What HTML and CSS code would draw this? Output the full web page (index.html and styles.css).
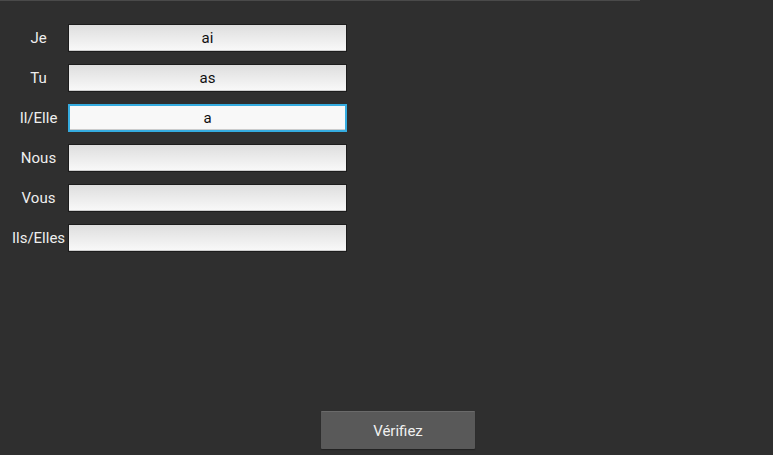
FILE: index.html
```html
<!DOCTYPE html>
<html>
<head>
<meta charset="utf-8">
<link rel="stylesheet" href="styles.css">
</head>
<body>
<div class="topline"></div>
<main class="page">
  <form class="grid">
    <label class="lbl">Je</label><div class="field">ai</div>
    <label class="lbl">Tu</label><div class="field">as</div>
    <label class="lbl">Il/Elle</label><div class="field focused">a</div>
    <label class="lbl">Nous</label><div class="field"></div>
    <label class="lbl">Vous</label><div class="field"></div>
    <label class="lbl">Ils/Elles</label><div class="field"></div>
  </form>
  <div class="actions"><button class="btn" type="button">Vérifiez</button></div>
</main>
</body>
</html>
```
FILE: styles.css
```css
html, body {
  margin: 0;
  padding: 0;
  height: 100%;
  background: #2f2f2f;
  font-family: Roboto, "Liberation Sans", sans-serif;
}
.topline {
  width: 640px;
  height: 1px;
  background: #4a4a4a;
}
.page {
  height: 454px;
  display: flex;
  flex-direction: column;
  box-sizing: border-box;
  padding-top: 23px;
}
.grid {
  display: grid;
  grid-template-columns: 68px 279px;
  grid-auto-rows: 28px;
  row-gap: 12px;
  flex: 1;
  align-content: start;
  margin: 0;
}
.lbl {
  color: #eeeeee;
  font-size: 15px;
  text-align: center;
  line-height: 28px;
  padding-left: 9px;
  white-space: nowrap;
}
.field {
  box-sizing: border-box;
  border: 1px solid #1c1c1c;
  box-shadow: inset 0 -1px 0 #cdcdcd;
  background: linear-gradient(#dedede, #f9f9f9);
  color: #111;
  font-size: 15px;
  text-align: center;
  line-height: 26px;
}
.field.focused {
  border: 2px solid #35ace0;
  background: #f8f8f8;
  box-shadow: inset 0 -1px 0 #cccccc;
  line-height: 24px;
}
.actions {
  padding-left: 321px;
  padding-bottom: 6px;
}
.btn {
  width: 154px;
  height: 38px;
  background: #595959;
  border: none;
  border-top: 1px solid #6a6a6a;
  border-radius: 1px;
  box-shadow: 0 1px 1px #222;
  color: #f0f0f0;
  font-family: Roboto, "Liberation Sans", sans-serif;
  font-size: 15px;
  padding: 0;
}
```
